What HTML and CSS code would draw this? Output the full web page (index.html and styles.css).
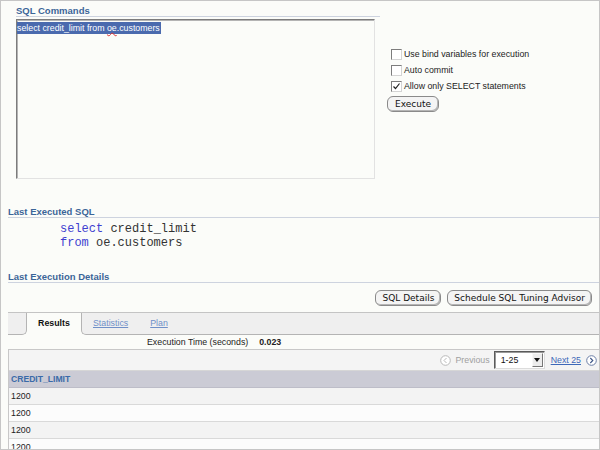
FILE: index.html
```html
<!DOCTYPE html>
<html>
<head>
<meta charset="utf-8">
<link rel="stylesheet" href="styles.css">
</head>
<body>
<div class="frame">
  <section class="cmd">
    <h2 class="hdr">SQL Commands</h2>
    <div class="cmd-body">
      <div class="editor"><span class="sel">select credit_limit from <span class="sp">oe</span>.customers</span></div>
      <div class="opts">
        <label class="opt"><span class="cb"></span>Use bind variables for execution</label>
        <label class="opt"><span class="cb"></span>Auto commit</label>
        <label class="opt"><span class="cb"><svg width="9" height="9" viewBox="0 0 9 9"><path d="M1.5 4.5 L3.5 6.5 L7.5 1.5" fill="none" stroke="#222" stroke-width="1.2"/></svg></span>Allow only SELECT statements</label>
        <button class="btn btn-exec">Execute</button>
      </div>
    </div>
  </section>

  <h2 class="hdr sec">Last Executed SQL</h2>
  <pre class="code"><span class="kw">select</span> credit_limit
<span class="kw">from</span> oe.customers</pre>

  <h2 class="hdr sec2">Last Execution Details</h2>
  <div class="actions">
    <button class="btn">SQL Details</button>
    <button class="btn">Schedule SQL Tuning Advisor</button>
  </div>

  <div class="tabs">
    <div class="tab-pad"></div>
    <div class="tab-on">Results</div>
    <div class="tab-rest">
      <a class="tab-link">Statistics</a>
      <a class="tab-link">Plan</a>
    </div>
  </div>

  <div class="exec"><span>Execution Time (seconds)</span><b>0.023</b></div>

  <div class="grid">
    <div class="nav">
      <svg class="ico" width="11" height="11" viewBox="0 0 11 11"><circle cx="5.5" cy="5.5" r="4.8" fill="#fff" stroke="#b9b9b9" stroke-width="1"/><path d="M6.5 3 L4 5.5 L6.5 8" fill="none" stroke="#b9b9b9" stroke-width="1"/></svg>
      <span class="prev">Previous</span>
      <div class="pager-sel"><span class="val">1-25</span><span class="arrow"><span class="tri"></span></span></div>
      <a class="next">Next 25</a>
      <svg class="ico" width="11" height="11" viewBox="0 0 11 11"><circle cx="5.5" cy="5.5" r="4.8" fill="#fff" stroke="#6b7ea6" stroke-width="1"/><path d="M4.3 3 L6.8 5.5 L4.3 8" fill="none" stroke="#3d5586" stroke-width="1.1"/></svg>
    </div>
    <div class="th">CREDIT_LIMIT</div>
    <div class="td odd">1200</div>
    <div class="td">1200</div>
    <div class="td odd">1200</div>
    <div class="td">1200</div>
  </div>
</div>
</body>
</html>
```

FILE: styles.css
```css
body {
  margin: 0;
  background: #fff;
  font-family: "Liberation Sans", Arial, sans-serif;
  font-size: 8.8px;
  color: #222;
}

.frame {
  width: 600px;
  height: 450px;
  box-sizing: border-box;
  border: 1px solid #c6c6c6;
  background: #fbfcf9;
  padding-left: 7px;
  overflow: hidden;
}

.hdr {
  margin: 0;
  font-size: 9.5px;
  font-weight: bold;
  color: #3b6598;
  line-height: 11px;
  border-bottom: 1px solid #cdd3df;
}

.cmd {
  padding-left: 8px;
}

.cmd .hdr {
  width: 364px;
  padding-top: 4px;
}

.cmd-body {
  display: flex;
  align-items: flex-start;
  margin-top: 2px;
}

.editor {
  width: 359px;
  height: 160px;
  box-sizing: border-box;
  border: 1px solid;
  border-color: #7c7c7c #e2e2e2 #e2e2e2 #7c7c7c;
  box-shadow: inset 1px 1px 0 #b4b4b4;
  padding: 2px 0 0 0;
}

.sel {
  display: inline-block;
  background: #4a6aae;
  color: #fff;
  line-height: 12px;
  padding-right: 1px;
}

.sp {
  text-decoration: underline wavy #d33;
  text-decoration-thickness: 1px;
  text-underline-offset: 1px;
}

.opts {
  margin-left: 16px;
  padding-top: 27px;
  display: flex;
  flex-direction: column;
  align-items: flex-start;
}

.opt {
  display: flex;
  align-items: center;
  height: 16px;
  gap: 2px;
}

.cb {
  width: 11px;
  height: 11px;
  box-sizing: border-box;
  border: 1px solid;
  border-color: #7d7d7d #d4d4d4 #d4d4d4 #7d7d7d;
  background: #fff;
  display: flex;
  align-items: center;
  justify-content: center;
}

.btn {
  font-family: "DejaVu Sans", sans-serif;
  font-size: 9px;
  height: 16px;
  line-height: 14px;
  padding: 0 6px;
  border: 1px solid #8a8a8a;
  border-radius: 6px;
  background: #f4f4f4;
  box-shadow: inset -1px -1px 0 #b5b5b5;
  color: #111;
  margin: 0;
}

.btn-exec {
  margin-top: 2px;
  margin-left: -4px;
  padding: 0 7px;
}

.sec {
  margin-top: 27px;
}

.code {
  margin: 4px 0 0 52px;
  font-family: "Liberation Mono", monospace;
  font-size: 12px;
  line-height: 14px;
  color: #333;
}

.kw {
  color: #3f3fd0;
}

.sec2 {
  margin-top: 21px;
}

.actions {
  display: flex;
  justify-content: flex-end;
  gap: 6px;
  margin-top: 7px;
  padding-right: 7px;
}

.tabs {
  display: flex;
  height: 23px;
  box-sizing: border-box;
  border-top: 1px solid #c4c4c4;
  margin-top: 6px;
}

.tab-pad {
  width: 18px;
  background: #efefef;
  border-bottom: 1px solid #b4b4b4;
  border-right: 1px solid #b4b4b4;
  border-bottom-right-radius: 5px;
}

.tab-on {
  width: 54px;
  text-align: center;
  font-weight: bold;
  line-height: 21px;
  color: #111;
}

.tab-rest {
  flex: 1;
  background: #efefef;
  border-bottom: 1px solid #b4b4b4;
  border-left: 1px solid #b4b4b4;
  border-bottom-left-radius: 5px;
  display: flex;
  gap: 22px;
  padding-left: 11px;
  line-height: 21px;
}

.tab-link {
  color: #7090c8;
  text-decoration: underline;
}

.exec {
  height: 14px;
  line-height: 14px;
  padding-left: 139px;
  display: flex;
  gap: 11px;
  color: #222;
}

.exec b {
  font-weight: bold;
}

.grid {
  border-top: 1px solid #c8c8c8;
  border-left: 1px solid #c8c8c8;
}

.nav {
  height: 20px;
  border-bottom: 1px solid #d6d6d6;
  background: #f4f4f4;
  display: flex;
  justify-content: flex-end;
  align-items: center;
  padding-right: 2px;
}

.ico {
  display: block;
}

.prev {
  color: #a0a0a0;
  margin: 0 4px;
}

.pager-sel {
  width: 51px;
  height: 18px;
  box-sizing: border-box;
  border: 1px solid;
  border-color: #5a5a5a #dcdcdc #dcdcdc #5a5a5a;
  box-shadow: inset 1px 1px 0 #9a9a9a;
  background: #fff;
  display: flex;
  align-items: center;
  justify-content: space-between;
  padding-left: 6px;
}

.val {
  color: #111;
}

.arrow {
  width: 11px;
  height: 14px;
  box-sizing: border-box;
  background: #ececec;
  border: 1px solid;
  border-color: #f8f8f8 #777 #777 #f8f8f8;
  margin-right: 1px;
  display: flex;
  align-items: center;
  justify-content: center;
}

.tri {
  width: 0;
  height: 0;
  border-left: 3px solid transparent;
  border-right: 3px solid transparent;
  border-top: 4px solid #111;
}

.next {
  color: #3e68b8;
  text-decoration: underline;
  margin: 0 5px 0 6px;
}

.th {
  height: 16px;
  line-height: 16px;
  background: #cbcbd5;
  border-bottom: 1px solid #bdbdc8;
  padding-left: 2px;
  font-size: 8.6px;
  font-weight: bold;
  color: #3a6aa8;
}

.td {
  height: 16px;
  line-height: 16px;
  padding-left: 2px;
  border-bottom: 1px solid #d9d9d9;
  background: #fcfcfc;
  color: #222;
}

.td.odd {
  background: #f3f3f3;
}
```
